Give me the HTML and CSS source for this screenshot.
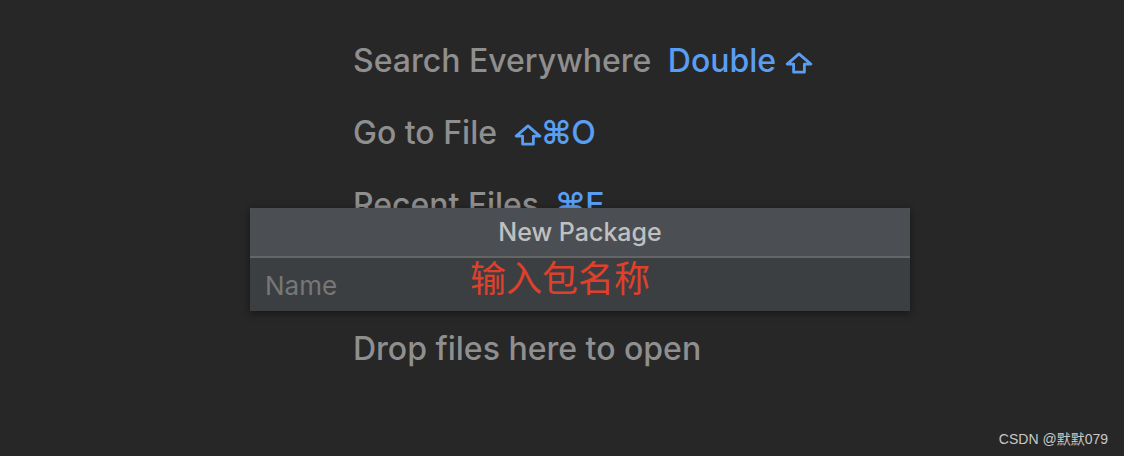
FILE: index.html
```html
<!DOCTYPE html>
<html lang="en">
<head>
    <meta charset="UTF-8">
    <title>Welcome</title>
    <link rel="stylesheet" href="styles.css">
</head>
<body>
    <div class="screen">
        <ul class="hints">
            <li>Search Everywhere <span class="key">Double <svg class="shift" viewBox="0 0 26 20"><path d="M13 1.5 L24 11 H18 V18.5 H8 V11 H2 Z" fill="none" stroke="currentColor" stroke-width="2.6" stroke-linejoin="round"/></svg></span></li>
            <li>Go to File <span class="key"><svg class="shift" viewBox="0 0 26 20"><path d="M13 1.5 L24 11 H18 V18.5 H8 V11 H2 Z" fill="none" stroke="currentColor" stroke-width="2.6" stroke-linejoin="round"/></svg><span class="cmd">⌘</span>O</span></li>
            <li>Recent Files <span class="key"><span class="cmd">⌘</span>E</span></li>
            <li class="spacer"></li>
            <li>Drop files here to open</li>
        </ul>

        <!-- new package popup -->
        <div class="dialog">
            <div class="dialog-title">New Package</div>
            <div class="dialog-body">
                <span class="placeholder">Name</span>
                <span class="note">输入包名称</span>
            </div>
        </div>

        <div class="watermark">CSDN @默默079</div>
    </div>
</body>
</html>
```

FILE: styles.css
```css
body {
    margin: 0;
    background-color: #272727;
    font-family: Inter, "Noto Sans", sans-serif;
}
.screen {
    position: relative;
    width: 1124px;
    height: 456px;
    overflow: hidden;
}
.hints {
    list-style: none;
    margin: 0;
    padding: 25px 0 0 353px;
}
.hints li {
    height: 72px;
    line-height: 72px;
    font-size: 32px;
    font-weight: 500;
    color: #8f8f8f;
    white-space: nowrap;
}
.key {
    margin-left: 8px;
    color: #5a9ef3;
}
.shift {
    width: 28px;
    height: 22px;
    vertical-align: -2px;
}
.cmd {
    font-family: "DejaVu Sans", sans-serif;
    font-weight: bold;
}
.dialog {
    position: absolute;
    left: 250px;
    top: 208px;
    width: 660px;
    box-shadow: 0 2px 8px rgba(0, 0, 0, 0.45);
}
.dialog-title {
    height: 48px;
    line-height: 48px;
    text-align: center;
    background-color: #4b4e52;
    color: #c0c0c0;
    font-size: 25px;
    font-weight: 500;
    border-bottom: 2px solid #656565;
}
.dialog-body {
    position: relative;
    height: 53px;
    background-color: #3c3f41;
}
.placeholder {
    position: absolute;
    left: 15px;
    top: 12px;
    font-size: 26px;
    color: #777777;
}
.note {
    position: absolute;
    left: 220px;
    top: -8px;
    font-family: "Noto Sans CJK SC", sans-serif;
    font-size: 36px;
    color: #e0402b;
}
.watermark {
    position: absolute;
    right: 16px;
    bottom: 8px;
    font-family: "Liberation Sans", "Noto Sans CJK SC", sans-serif;
    font-size: 14px;
    color: #c8c8c8;
}
```
